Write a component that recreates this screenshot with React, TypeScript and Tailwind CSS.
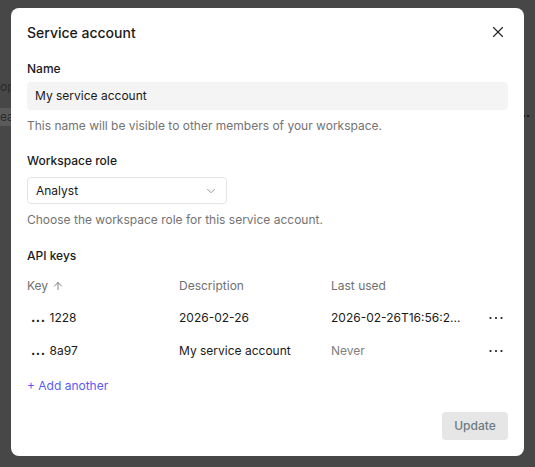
import React from 'react';
import { X, ChevronDown, ArrowUp } from 'lucide-react';

const Dots: React.FC = () => (
  <svg width="16" height="4" viewBox="0 0 16 4" className="text-[#1a1a1a]">
    <circle cx="2.5" cy="2" r="1.1" fill="currentColor" />
    <circle cx="8" cy="2" r="1.1" fill="currentColor" />
    <circle cx="13.5" cy="2" r="1.1" fill="currentColor" />
  </svg>
);

const keys = [
  { suffix: '1228', description: '2026-02-26', lastUsed: '2026-02-26T16:56:2...', never: false },
  { suffix: '8a97', description: 'My service account', lastUsed: 'Never', never: true },
];

export default function App() {
  return (
    <div
      className="relative h-[467px] w-[535px] overflow-hidden bg-[#474747] pl-[11px] pt-[8px]"
      style={{ fontFamily: 'Inter, "Noto Sans", sans-serif' }}
    >
      {/* page behind the overlay */}
      <span className="absolute left-0 top-[78px] text-[12px] text-[#2b2b2b]">op</span>
      <span className="absolute left-0 top-[108px] bg-[#5a5a5a] pr-1 text-[12px] text-[#2b2b2b]">ea</span>
      <span className="absolute left-[522px] top-[104px] text-[12px] font-bold text-[#111]">..</span>

      <div className="relative flex h-[448px] w-[513px] flex-col rounded-lg bg-white px-4 pt-[14px] text-[#1a1a1a]">
        <div className="flex h-5 items-center justify-between">
          <h2 className="text-[14px] font-medium">Service account</h2>
          <X className="mr-[1px] h-[18px] w-[18px] text-[#222]" strokeWidth={1.5} />
        </div>

        <label className="mt-[18px] text-[12px] font-medium leading-[18px]">Name</label>
        <div className="mt-1 flex h-7 items-center rounded bg-[#f4f4f4] px-2 text-[12px]">My service account</div>
        <p className="mt-[7px] text-[12px] leading-[18px] text-[#737373]">
          This name will be visible to other members of your workspace.
        </p>

        <label className="mt-[17px] text-[12px] font-medium leading-[18px]">Workspace role</label>
        <div className="mt-[7px] flex h-[27px] w-[200px] items-center justify-between rounded border border-[#e5e5e5] px-2 text-[12px]">
          <span>Analyst</span>
          <ChevronDown className="h-3.5 w-3.5 text-[#8a8a8a]" strokeWidth={1.5} />
        </div>
        <p className="mt-[7px] text-[12px] leading-[18px] text-[#737373]">
          Choose the workspace role for this service account.
        </p>

        <label className="mt-[18px] text-[12px] font-medium leading-[18px]">API keys</label>
        <div className="mt-[6px] text-[12px]">
          <div className="grid h-[30px] grid-cols-[152px_152px_152px_1fr] items-center text-[#707070]">
            <span className="flex items-center gap-1">
              Key <ArrowUp className="h-3 w-3" strokeWidth={1.75} />
            </span>
            <span>Description</span>
            <span>Last used</span>
            <span />
          </div>
          {keys.map((k) => (
            <div key={k.suffix} className="grid h-[33px] grid-cols-[152px_152px_152px_1fr] items-center">
              <span className="flex items-center pl-1">
                <span className="text-[13px] font-bold tracking-[0.5px]">...</span>
                <span className="ml-1">{k.suffix}</span>
              </span>
              <span>{k.description}</span>
              <span className={k.never ? 'text-[#808080]' : ''}>{k.lastUsed}</span>
              <span className="flex justify-center">
                <Dots />
              </span>
            </div>
          ))}
        </div>

        <button className="mt-[10px] self-start text-[12px] leading-[18px] text-[#5b5bf3]">+ Add another</button>

        <div className="mt-[17px] flex justify-end">
          <button className="h-7 w-[66px] rounded bg-[#e6e6e6] text-[12px] font-medium text-[#6b7a83]">Update</button>
        </div>
      </div>
    </div>
  );
}
